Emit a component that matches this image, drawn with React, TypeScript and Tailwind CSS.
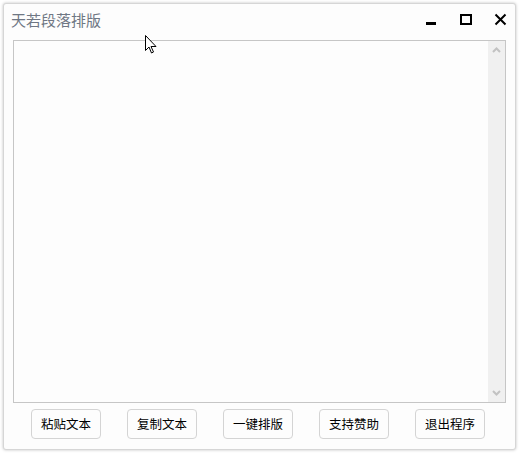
import React from 'react';

const BUTTONS = ['粘贴文本', '复制文本', '一键排版', '支持赞助', '退出程序'];

const FONT = { fontFamily: '"Noto Sans CJK SC", "Liberation Sans", sans-serif' };

export default function App() {
  return (
    <div className="relative w-[519px] h-[454px] bg-white p-[3px]" style={FONT}>
      <div className="h-[447px] flex flex-col bg-[#fdfdfd] border border-[#d6d6d6] rounded-[3px] shadow-[0_0_3px_rgba(0,0,0,0.25)]">
        {/* title bar */}
        <div className="h-[36px] flex items-center pl-[7px] pr-[8px] shrink-0">
          <span className="text-[15px] leading-none text-[#6f7784] -mt-[5px]">天若段落排版</span>
          <div className="ml-auto flex items-center gap-[22px] -mt-[5px]">
            <svg width="12" height="12" viewBox="0 0 12 12">
              <rect x="0" y="8" width="10" height="3" fill="#000" />
            </svg>
            <svg width="12" height="12" viewBox="0 0 12 12">
              <rect x="1" y="1" width="10" height="9" fill="none" stroke="#000" strokeWidth="2" />
            </svg>
            <svg width="13" height="13" viewBox="0 0 13 13">
              <path d="M1.5 1.5 L11.5 11.5 M11.5 1.5 L1.5 11.5" stroke="#000" strokeWidth="2" />
            </svg>
          </div>
        </div>

        {/* text area */}
        <div className="mx-[9px] h-[363px] border border-[#c6c6c6] bg-[#fdfdfd] flex shrink-0">
          <div className="flex-1" />
          <div className="w-[17px] bg-[#f0f0f0] flex flex-col items-center justify-between py-[6px]">
            <svg width="9" height="6" viewBox="0 0 9 6">
              <path d="M1 5 L4.5 1.5 L8 5" fill="none" stroke="#c2c2c2" strokeWidth="2" />
            </svg>
            <svg width="9" height="6" viewBox="0 0 9 6">
              <path d="M1 1 L4.5 4.5 L8 1" fill="none" stroke="#c2c2c2" strokeWidth="2" />
            </svg>
          </div>
        </div>

        {/* buttons */}
        <div className="flex gap-[26px] pl-[27px] pt-[6px]">
          {BUTTONS.map((label) => (
            <button
              key={label}
              className="w-[70px] h-[30px] rounded-[4px] border border-[#d4d4d4] bg-[#fdfdfd] text-[12.5px] text-black leading-none"
            >
              {label}
            </button>
          ))}
        </div>
      </div>

      {/* mouse cursor */}
      <svg className="absolute left-[145px] top-[35px]" width="14" height="21" viewBox="0 0 14 21">
        <path
          d="M0.5 0.5 L0.5 15.5 L4 12 L6.5 18 L8.5 17 L6 11.5 L11 11.5 Z"
          fill="#fff"
          stroke="#000"
          strokeWidth="1"
          strokeLinejoin="miter"
        />
      </svg>
    </div>
  );
}
